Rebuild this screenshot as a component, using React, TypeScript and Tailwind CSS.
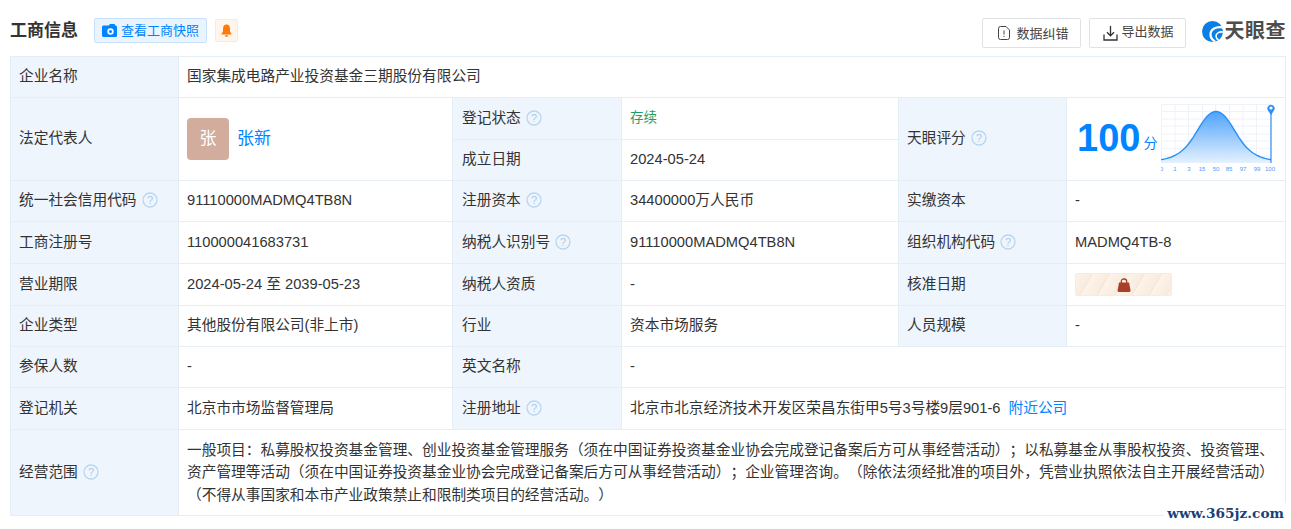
import React from "react";

const Q = () => (
  <svg width="16" height="16" viewBox="0 0 16 16" className="inline-block shrink-0 ml-[5px]">
    <circle cx="8" cy="8" r="7" fill="none" stroke="#b9d6ef" strokeWidth="1.3" />
    <text x="8" y="12" textAnchor="middle" fontSize="11" fill="#a9cbe8" fontFamily="Liberation Sans, sans-serif">?</text>
  </svg>
);

const L = ({ children, q, rowSpan, mid }: { children: React.ReactNode; q?: boolean; rowSpan?: number; mid?: boolean }) => (
  <td rowSpan={rowSpan} className={`border border-[#e5edf5] bg-[#eef5fc] pr-0 pt-0 pb-[2px] text-[#333] ${mid ? "pl-[9px]" : "pl-[8px]"}`}>
    <span className="inline-flex items-center whitespace-nowrap">{children}{q && <Q />}</span>
  </td>
);

const V = ({ children, colSpan, rowSpan, className = "" }: { children?: React.ReactNode; colSpan?: number; rowSpan?: number; className?: string }) => (
  <td colSpan={colSpan} rowSpan={rowSpan} className={`border border-[#e5edf5] pl-[8px] pr-2 pt-0 pb-[2px] text-[#333] ${className}`}>{children}</td>
);

const curve = (() => {
  const pts: string[] = [];
  for (let i = 0; i <= 110; i += 2) {
    const x = i;
    const d = (x - 55) / 17;
    const y = 58.500 - 51 / (1 + d * d * 0.35 + d * d * d * d * 0.12);
    pts.push(`${x},${y.toFixed(2)}`);
  }
  return pts;
})();

const Chart = () => (
  <svg width="116" height="70" viewBox="0 0 116 70" className="block">
    <defs>
      <linearGradient id="fillc" x1="0" y1="0" x2="0" y2="1">
        <stop offset="0" stopColor="#3f9bfb" />
        <stop offset="1" stopColor="#e3f0fe" />
      </linearGradient>
    </defs>
    {[0, 13.5, 27, 41, 54, 68, 81.5, 95, 109].map((x) => (
      <line key={x} x1={x + 0.5} y1="0" x2={x + 0.5} y2="59" stroke="#eef3f9" strokeWidth="1" />
    ))}
    {[0.5, 7.5, 15, 22, 30, 37, 44.5, 52].map((y) => (
      <line key={y} x1="0" y1={y} x2="110" y2={y} stroke="#eef3f9" strokeWidth="1" />
    ))}
    <polygon points={`0,59 ${curve.join(" ")} 110,59`} fill="url(#fillc)" fillOpacity="0.92" />
    <polyline points={curve.join(" ")} fill="none" stroke="#2a8ff7" strokeWidth="1.4" />
    <line x1="110" y1="8" x2="110" y2="59" stroke="#2a8ff7" strokeWidth="1.2" />
    <path d="M110 11 L107 6.5 A3.6 3.6 0 1 1 113 6.5 Z" fill="#2a8ff7" />
    <circle cx="110" cy="4" r="1.6" fill="#fff" />
    {[["0", 0.5], ["1", 14], ["3", 28], ["15", 41], ["50", 55], ["85", 68], ["97", 82], ["99", 96], ["100", 109]].map(([t, x]) => (
      <text key={String(t)} x={Number(x)} y="67" textAnchor="middle" fontSize="6" fill="#4a9df5" fontFamily="Liberation Sans, sans-serif">{t}</text>
    ))}
  </svg>
);

export default function App() {
  return (
    <div className="relative h-[529px] w-[1291px] overflow-hidden bg-white pl-[10px] text-[14.7px] leading-[20px] text-[#333] [text-spacing-trim:space-all]" style={{ fontFamily: '"Liberation Sans", "Noto Sans CJK SC", sans-serif' }}>
      <div className="flex h-[56px] w-[1276px] items-start">
        <div className="flex items-center pt-[18px]">
          <span className="text-[17px] font-bold leading-[24px] text-[#333]">工商信息</span>
          <span className="ml-[16px] flex h-[25px] w-[113px] items-center justify-center gap-[4px] rounded-[2px] border border-[#c8e2fd] bg-[#eaf4fe] text-[13px] text-[#0084ff]">
            <svg width="15" height="13" viewBox="0 0 15 13" className="shrink-0"><path d="M1.500 1.500H7L7.800 0H12.500L13.300 1.500H13.500Q15 1.500 15 3V11.500Q15 13 13.500 13H1.500Q0 13 0 11.500V3Q0 1.500 1.500 1.500Z" fill="#0084ff" /><circle cx="8.500" cy="7.500" r="3.200" fill="#fff" /><circle cx="8.500" cy="7.500" r="1.500" fill="#0084ff" /></svg>
            <span className="whitespace-nowrap">查看工商快照</span>
          </span>
          <span className="ml-[8px] flex h-[23px] w-[23px] items-center justify-center rounded-[2px] border border-[#fde9d8] bg-[#fff5ec]">
            <svg width="11" height="13" viewBox="0 0 11 13"><path d="M5.5 0.5C3 0.5 2 2.5 2 5V7.5L0.5 9.8V10.5H10.5V9.8L9 7.5V5C9 2.5 8 0.5 5.5 0.5Z" fill="#ff7a0d" /><path d="M3.8 11.3H7.2C7 12.4 6.3 13 5.5 13S4 12.4 3.8 11.3Z" fill="#ff7a0d" /></svg>
          </span>
        </div>
        <div className="ml-auto flex items-center pt-[18px]">
          <span className="flex h-[30px] w-[99px] items-center gap-[7px] rounded-[2px] border border-[#dfe3e8] pl-[15px] text-[13px] text-[#444]">
            <svg width="12" height="14" viewBox="0 0 12 14" fill="none" stroke="#444" strokeWidth="1"><path d="M2.500 0.500H8L11.500 4V11.500Q11.500 13.500 9.500 13.500H2.500Q0.500 13.500 0.500 11.500V2.500Q0.500 0.500 2.500 0.500Z" /><path d="M6 4.500V8.500M6 9.800V11" /></svg>
            <span className="mt-[2px]">数据纠错</span>
          </span>
          <span className="ml-[8px] flex h-[30px] w-[97px] items-center gap-[4px] rounded-[2px] border border-[#dfe3e8] pl-[13px] text-[13px] text-[#444]">
            <svg width="15" height="16" viewBox="0 0 15 16" fill="none" stroke="#333" strokeWidth="1.300" className="shrink-0"><path d="M7.500 1V10.500M4 7.300L7.500 10.800L11 7.300M1 9.500V15H14V9.500" /></svg>
            <span className="mt-[-2px]">导出数据</span>
          </span>
          <span className="ml-[16px] mt-[-4px] flex items-center">
            <svg width="21" height="21" viewBox="0 0 21 21" className="shrink-0">
              <circle cx="10.500" cy="10.500" r="10.500" fill="#0a7fe6" />
              <path d="M21 6.500C14 5 8.500 8.500 8.500 13.500C8.500 16.500 10.500 19 13 20.500" fill="none" stroke="#fff" strokeWidth="2.200" />
              <path d="M21 11C17 10.500 14 12.500 14 15C14 16.500 15 18 16.500 19" fill="none" stroke="#fff" strokeWidth="1.600" />
            </svg>
            <span className="ml-[2px] whitespace-nowrap text-[20px] font-bold leading-none tracking-[0.5px] text-[#4d4d4d]">天眼查</span>
          </span>
        </div>
      </div>

      <table className="w-[1275px] table-fixed border-collapse">
        <colgroup>
          <col className="w-[168px]" />
          <col className="w-[274px]" />
          <col className="w-[169px]" />
          <col className="w-[277px]" />
          <col className="w-[168px]" />
          <col className="w-[219px]" />
        </colgroup>
        <tbody>
          <tr className="h-[41px]">
            <L>企业名称</L>
            <V colSpan={5}>国家集成电路产业投资基金三期股份有限公司</V>
          </tr>
          <tr className="h-[42px]">
            <L rowSpan={2}>法定代表人</L>
            <V rowSpan={2} className="!pb-0">
              <div className="flex items-center">
                <span className="flex h-[42px] w-[42px] items-center justify-center rounded-[4px] bg-[#d2ad9d] text-[17px] text-white">张</span>
                <span className="ml-[8px] text-[17px] text-[#0084ff]">张新</span>
              </div>
            </V>
            <L q mid>登记状态</L>
            <V className="text-[13.5px] !text-[#1f9d63]">存续</V>
            <L rowSpan={2} q>天眼评分</L>
            <V rowSpan={2} className="!pl-[10px] !pr-0">
              <div className="flex items-center">
                <span className="text-[38px] font-bold leading-none text-[#0084ff]">100</span>
                <span className="ml-[3px] mt-[10px] text-[14px] text-[#0084ff]">分</span>
                <span className="ml-[4px] mt-[2px]"><Chart /></span>
              </div>
            </V>
          </tr>
          <tr className="h-[41px]">
            <L mid>成立日期</L>
            <V>2024-05-24</V>
          </tr>
          <tr className="h-[41px]">
            <L q>统一社会信用代码</L>
            <V>91110000MADMQ4TB8N</V>
            <L q mid>注册资本</L>
            <V>34400000万人民币</V>
            <L>实缴资本</L>
            <V>-</V>
          </tr>
          <tr className="h-[42px]">
            <L>工商注册号</L>
            <V>110000041683731</V>
            <L q mid>纳税人识别号</L>
            <V>91110000MADMQ4TB8N</V>
            <L q>组织机构代码</L>
            <V>MADMQ4TB-8</V>
          </tr>
          <tr className="h-[42px]">
            <L>营业期限</L>
            <V>2024-05-24 至 2039-05-23</V>
            <L mid>纳税人资质</L>
            <V>-</V>
            <L>核准日期</L>
            <V className="!pb-0">
              <span className="flex h-[23px] w-[97px] items-center justify-center rounded-[2px] border border-[#f8ebdd] bg-[repeating-linear-gradient(120deg,#fdf3e9_0px,#f9ecdf_13px,#f5e5d6_14px,#fdf3e9_15px)]">
                <svg width="14" height="14" viewBox="0 0 14 14"><path d="M4.300 5V3.500Q4.300 1 7 1T9.700 3.500V5" fill="none" stroke="#a8402a" strokeWidth="1.300" /><path d="M2 4.500H12L13.500 12.500Q13.500 14 12 14H2Q0.500 14 0.500 12.500Z" fill="#a8402a" /></svg>
              </span>
            </V>
          </tr>
          <tr className="h-[41px]">
            <L>企业类型</L>
            <V>其他股份有限公司(非上市)</V>
            <L mid>行业</L>
            <V>资本市场服务</V>
            <L>人员规模</L>
            <V>-</V>
          </tr>
          <tr className="h-[41px]">
            <L>参保人数</L>
            <V>-</V>
            <L mid>英文名称</L>
            <V colSpan={3}>-</V>
          </tr>
          <tr className="h-[42px]">
            <L>登记机关</L>
            <V>北京市市场监督管理局</V>
            <L q mid>注册地址</L>
            <V colSpan={3}>
              北京市北京经济技术开发区荣昌东街甲5号3号楼9层901-6
              <span className="ml-[8px] text-[#0084ff]">附近公司</span>
            </V>
          </tr>
          <tr className="h-[86px]">
            <L q>经营范围</L>
            <V colSpan={5} className="!leading-[22.5px] !pb-0 !pr-0">
              一般项目：私募股权投资基金管理、创业投资基金管理服务（须在中国证券投资基金业协会完成登记备案后方可从事经营活动）；以私募基金从事股权投资、投资管理、<br />资产管理等活动（须在中国证券投资基金业协会完成登记备案后方可从事经营活动）；企业管理咨询。（除依法须经批准的项目外，凭营业执照依法自主开展经营活动）<br />（不得从事国家和本市产业政策禁止和限制类项目的经营活动。）
            </V>
          </tr>
        </tbody>
      </table>

      <span className="absolute bottom-[6px] right-0 bg-white pl-[3px] pr-[7px] text-[13.7px] font-bold leading-[20px] text-[#1b3f78]" style={{ fontFamily: '"DejaVu Serif", serif' }}>www.365jz.com</span>
    </div>
  );
}
